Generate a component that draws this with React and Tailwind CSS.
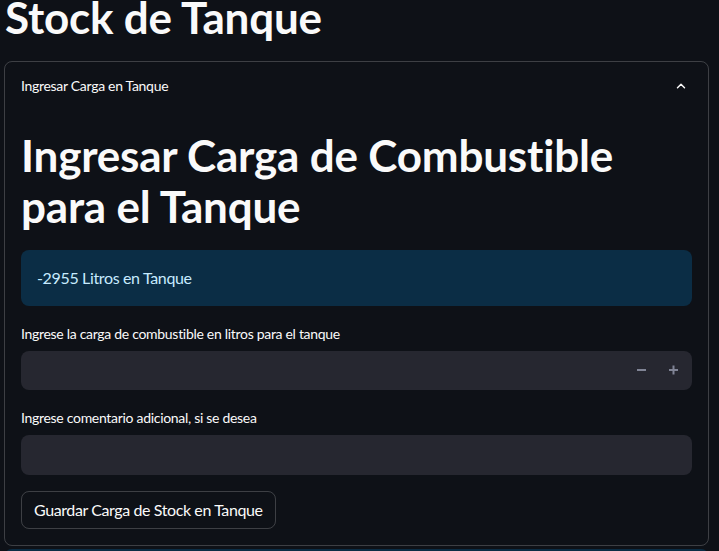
import React from 'react';

function App() {
    return (
        <div className="min-h-[551px] w-full bg-[#0e1117] text-[#fafafa] overflow-hidden" style={{ fontFamily: 'Lato, "Noto Sans", sans-serif' }}>
            <div className="pl-[4px] pr-[10px]">
                <h1 className="text-[44px] font-bold leading-[1.2] mt-[-9px] pl-[1px] tracking-[-0.2px]">Stock de Tanque</h1>
                <div className="mt-[17px] border border-[rgba(250,250,250,0.2)] rounded-lg">
                    <div className="flex items-center justify-between px-4 h-[48px] text-[14px] tracking-[-0.3px]">
                        <span>Ingresar Carga en Tanque</span>
                        <svg width="14" height="14" viewBox="0 0 24 24" fill="none" stroke="#fafafa" strokeWidth="2.5" strokeLinecap="round" strokeLinejoin="round" className="mr-[4px]">
                            <path d="M6 15l6-6 6 6" />
                        </svg>
                    </div>
                    <div className="px-4 pb-4">
                        <h2 className="text-[44px] font-bold leading-[51px] mt-[20px] tracking-[-0.2px]">Ingresar Carga de Combustible para el Tanque</h2>
                        <div className="mt-[18px] h-[56px] rounded-lg bg-[#0b2d45] text-[#c7ebff] text-[16px] tracking-[-0.35px] flex items-center px-4">
                            -2955 Litros en Tanque
                        </div>
                        <div className="mt-[19px] text-[14px] leading-[18px] tracking-[-0.3px]">Ingrese la carga de combustible en litros para el tanque</div>
                        <div className="mt-[8px] h-[39px] rounded-lg bg-[#262730] flex items-center justify-end pr-[10px] gap-[16px]">
                            <svg width="16" height="16" viewBox="0 0 16 16"><rect x="3" y="7" width="9" height="2" fill="#808495" /></svg>
                            <svg width="16" height="16" viewBox="0 0 16 16"><rect x="3" y="7" width="9" height="2" fill="#808495" /><rect x="6.5" y="3.5" width="2" height="9" fill="#808495" /></svg>
                        </div>
                        <div className="mt-[19px] text-[14px] leading-[18px] tracking-[-0.3px]">Ingrese comentario adicional, si se desea</div>
                        <div className="mt-[8px] h-[40px] rounded-lg bg-[#262730]"></div>
                        <button className="mt-[16px] h-[38px] px-3 rounded-lg border border-[rgba(250,250,250,0.2)] text-[16px] tracking-[-0.4px]">
                            Guardar Carga de Stock en Tanque
                        </button>
                    </div>
                </div>
                <div className="mt-[3px] h-[20px] rounded-lg bg-[#0b2d45]"></div>
            </div>
        </div>
    );
}

export default App;
